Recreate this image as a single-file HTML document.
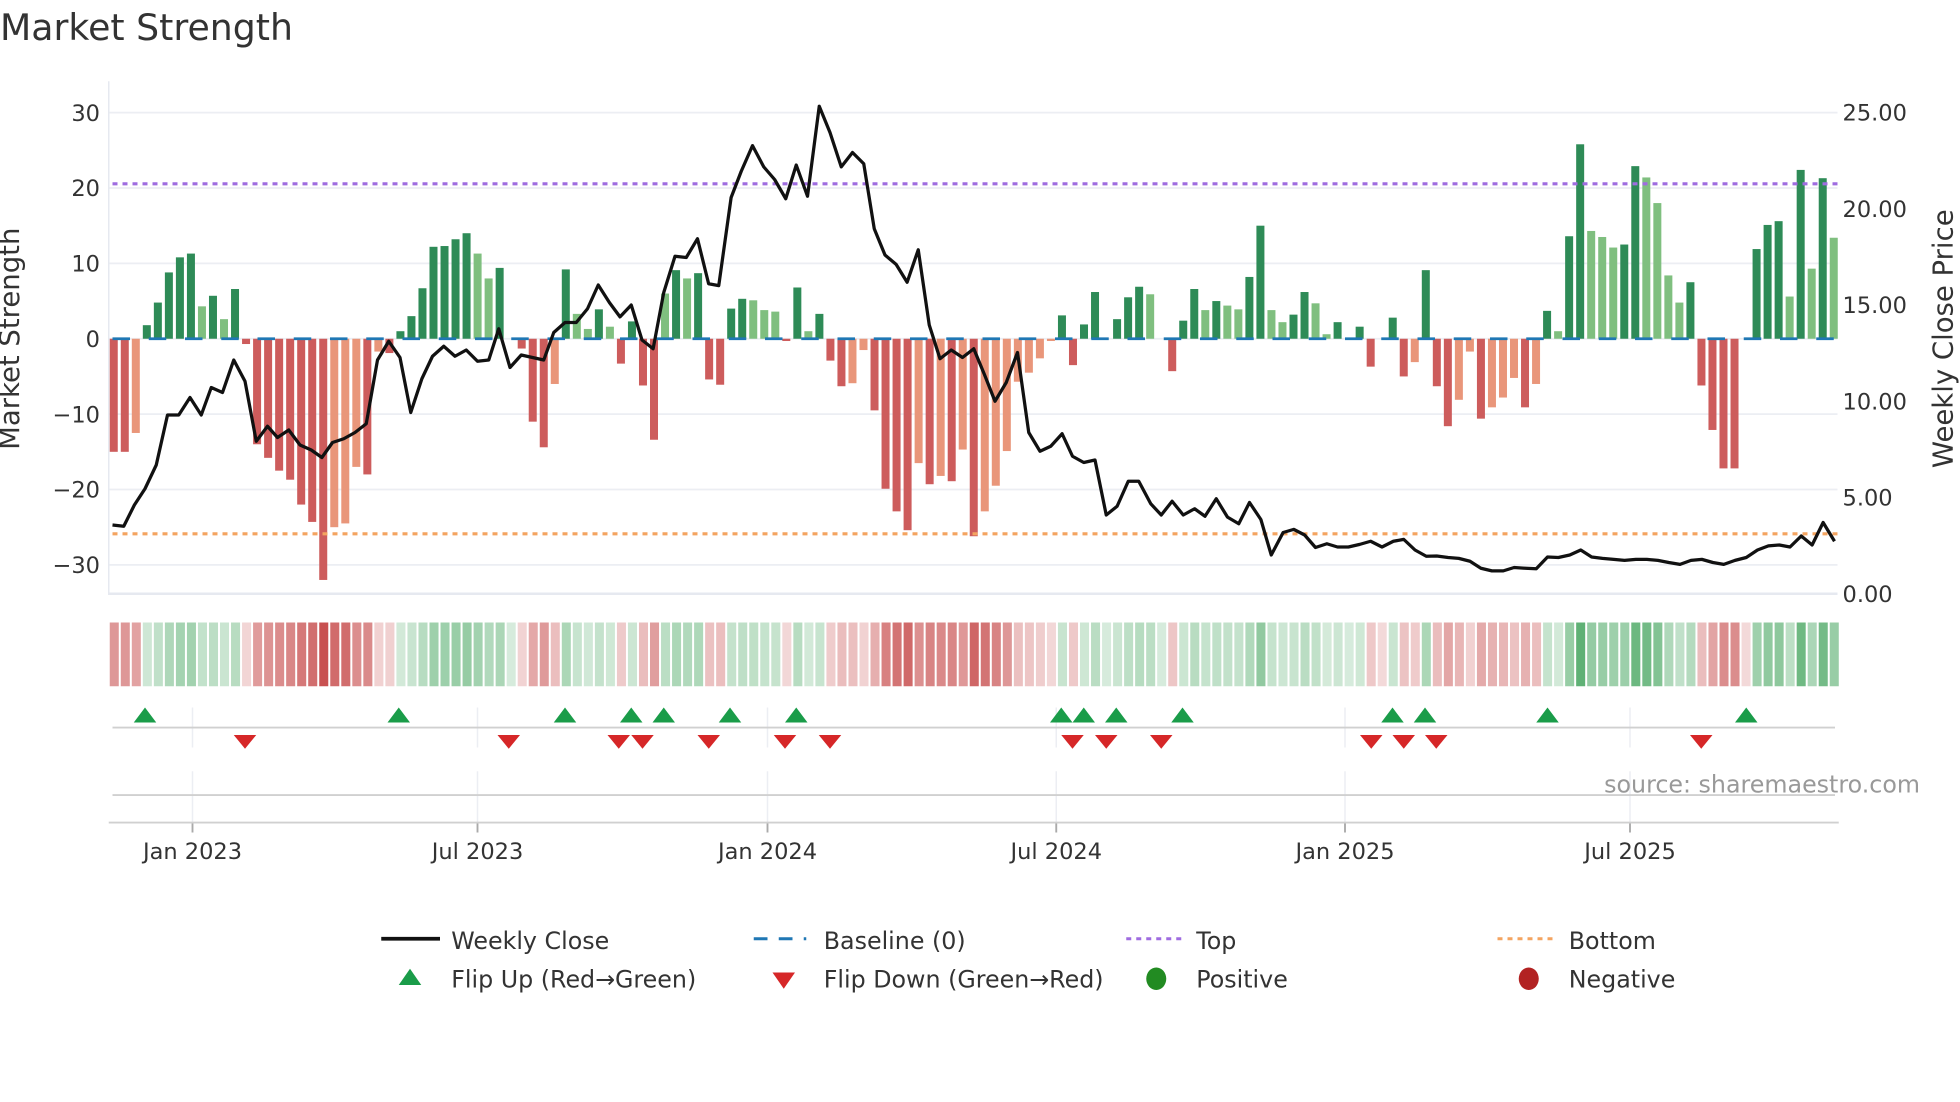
<!DOCTYPE html>
<html><head><meta charset="utf-8"><style>
html,body{margin:0;padding:0;background:#fff;width:1960px;height:1102px;overflow:hidden}
svg{display:block}
text{font-family:"DejaVu Sans","Liberation Sans",sans-serif;fill:#333}
</style></head><body>
<svg id="s" width="1960" height="1102" viewBox="0 0 1568 881.6" xmlns="http://www.w3.org/2000/svg">
<text x="0" y="32" font-size="29">Market Strength</text>
<g id="grid"></g>
<g id="heat"></g>
<g id="bars"></g>
<g id="lines"></g>
<g id="marks"></g>
<text x="15" y="271" font-size="22" text-anchor="middle" transform="rotate(-90 15 271)">Market Strength</text>
<text x="1562" y="271" font-size="22" text-anchor="middle" transform="rotate(-90 1562 271)">Weekly Close Price</text>
<text x="1536" y="634" font-size="19" text-anchor="end" style="fill:#999">source: sharemaestro.com</text>
<g font-size="19">
<line x1="305" y1="751" x2="352" y2="751" stroke="#111" stroke-width="3"/>
<text x="361" y="759">Weekly Close</text>
<line x1="603" y1="751" x2="645" y2="751" stroke="#1f77b4" stroke-width="2.4" stroke-dasharray="11 9"/>
<text x="659" y="759">Baseline (0)</text>
<line x1="901" y1="751" x2="945" y2="751" stroke="#9f6ce0" stroke-width="2.4" stroke-dasharray="4 4"/>
<text x="957" y="759">Top</text>
<line x1="1198" y1="751" x2="1243" y2="751" stroke="#f4a460" stroke-width="2.4" stroke-dasharray="4 4"/>
<text x="1255" y="759">Bottom</text>
<polygon points="319,788 337,788 328,775" fill="#1a9c49"/>
<text x="361" y="790">Flip Up (Red→Green)</text>
<polygon points="618,778 636,778 627,791" fill="#d62728"/>
<text x="659" y="790">Flip Down (Green→Red)</text>
<ellipse cx="925" cy="783" rx="8" ry="9" fill="#228b22"/>
<text x="957" y="790">Positive</text>
<ellipse cx="1223" cy="783" rx="8" ry="9" fill="#b22222"/>
<text x="1255" y="790">Negative</text>
</g>
</svg>
<script>
const NS="http://www.w3.org/2000/svg";
function el(p,t,a,txt){const e=document.createElementNS(NS,t);for(const k in a)e.setAttribute(k,a[k]);if(txt!==undefined)e.textContent=txt;document.getElementById(p).appendChild(e);return e;}
const V=[[-15,0],[-15,0],[-12.5,1],[1.8,0],[4.8,0],[8.8,0],[10.8,0],[11.3,0],[4.3,1],[5.7,0],[2.6,1],[6.6,0],[-0.7,0],[-14,0],[-15.8,0],[-17.5,0],[-18.7,0],[-22,0],[-24.3,0],[-32,0],[-25,1],[-24.5,1],[-17,1],[-18,0],[-1.7,1],[-1.9,0],[1,0],[3,0],[6.7,0],[12.2,0],[12.3,0],[13.2,0],[14,0],[11.3,1],[8,1],[9.4,0],[0,0],[-1.3,0],[-11,0],[-14.4,0],[-6,1],[9.2,0],[3.3,1],[1.3,1],[3.9,0],[1.6,1],[-3.3,0],[2.3,0],[-6.2,0],[-13.4,0],
[6,1],[9.1,0],[8,1],[8.7,0],[-5.4,0],[-6.1,0],[4,0],[5.3,0],[5.1,1],[3.8,1],[3.6,1],[-0.3,0],[6.8,0],[1,1],[3.3,0],[-2.9,0],[-6.3,0],[-5.9,1],[-1.5,1],[-9.5,0],[-19.9,0],[-22.9,0],[-25.4,0],[-16.5,1],[-19.3,0],[-18.2,1],[-18.9,0],[-14.7,1],[-26.2,0],[-22.9,1],[-19.5,1],[-14.9,1],[-5.7,1],[-4.5,1],[-2.6,1],[-0.3,1],[3.1,0],[-3.5,0],[1.9,0],[6.2,0],[0,0],[2.6,0],[5.5,0],[6.9,0],[5.9,1],[0,0],[-4.3,0],[2.4,0],[6.6,0],
[3.8,1],[5,0],[4.4,1],[3.9,1],[8.2,0],[15,0],[3.8,1],[2.2,1],[3.2,0],[6.2,0],[4.7,1],[0.6,1],[2.2,0],[0,0],[1.6,0],[-3.7,0],[0,0],[2.8,0],[-5,0],[-3.1,1],[9.1,0],[-6.3,0],[-11.6,0],[-8.1,1],[-1.7,1],[-10.6,0],[-9.1,1],[-7.8,1],[-5.2,1],[-9.1,0],[-6,1],[3.7,0],[1,1],[13.6,0],[25.8,0],[14.3,1],[13.5,1],[12.1,1],[12.5,0],[22.9,0],[21.4,1],[18,1],[8.4,1],[4.8,1],[7.5,0],[-6.2,0],[-12.1,0],[-17.2,0],[-17.2,0],[0,0],[11.9,0],[15.1,0],[15.6,0],[5.6,1],[22.4,0],[9.3,1],[21.3,0],[13.4,1]];
const X0=91,DX=(1467-91)/156;const Y0=271,PU=6.03;
[30,20,10,0,-10,-20,-30].forEach(v=>{const y=Y0-v*PU;el("grid","line",{x1:87,x2:1470,y1:y,y2:y,stroke:"#eceef3","stroke-width":1.4});el("grid","text",{x:80,y:y+6.5,"font-size":18,"text-anchor":"end"},(v<0?"\u2212":"")+Math.abs(v));});
el("grid","line",{x1:87,x2:1470,y1:475,y2:475,stroke:"#e6e9f0","stroke-width":2});
el("grid","line",{x1:87,x2:87,y1:65,y2:476,stroke:"#e6e9f0","stroke-width":1.2});
["25.00","20.00","15.00","10.00","5.00","0.00"].forEach((t,k)=>{el("grid","text",{x:1474,y:90+k*77+6.5,"font-size":18},t);});
const ticks=[[154,"Jan 2023"],[382,"Jul 2023"],[614,"Jan 2024"],[845,"Jul 2024"],[1076,"Jan 2025"],[1304,"Jul 2025"]];
ticks.forEach(([x,t])=>{el("grid","line",{x1:x,x2:x,y1:566,y2:598,stroke:"#eceef3","stroke-width":1.2});el("grid","line",{x1:x,x2:x,y1:617,y2:658,stroke:"#eceef3","stroke-width":1.2});el("grid","line",{x1:x,x2:x,y1:658,y2:666,stroke:"#aaa","stroke-width":1.5});el("grid","text",{x:x,y:687,"font-size":18,"text-anchor":"middle"},t);});
el("grid","line",{x1:90,x2:1468,y1:582,y2:582,stroke:"#d0d0d0","stroke-width":1.5});
el("grid","line",{x1:90,x2:1468,y1:636,y2:636,stroke:"#d0d0d0","stroke-width":1.5});
el("grid","line",{x1:87,x2:1471,y1:658,y2:658,stroke:"#d0d0d0","stroke-width":1.5});
let last=1;
V.forEach(([v],i)=>{let s=v>0?1:v<0?-1:last;last=s;const a=Math.min(1,0.22+Math.abs(v)/30*0.75);const base=s>0?[70,165,95]:[200,80,80];const c=base.map(b=>Math.round(255-(255-b)*a));const x=87+i*DX;el("heat","rect",{x:x+0.8,y:498,width:DX-1.6,height:51,fill:`rgb(${c})`});});
V.forEach(([v,l],i)=>{if(v===0)return;const x=X0+i*DX;const h=Math.abs(v)*PU;const col=v>0?(l?"#7fbf7f":"#2e8b57"):(l?"#e9967a":"#cd5c5c");el("bars","rect",{x:x-3.2,y:v>0?Y0-h:Y0,width:6.4,height:h,fill:col});});
el("lines","line",{x1:90,x2:1470,y1:Y0,y2:Y0,stroke:"#1f77b4","stroke-width":2.2,"stroke-dasharray":"14 15"});
el("lines","line",{x1:90,x2:1470,y1:147,y2:147,stroke:"#9f6ce0","stroke-width":2.5,"stroke-dasharray":"4 4"});
el("lines","line",{x1:90,x2:1470,y1:427,y2:427,stroke:"#f4a460","stroke-width":2.5,"stroke-dasharray":"4 4"});
const P=[[90,420],[99,421],[107.5,404],[116,391],[125,372],[134,332],[143,332],[152,318],[161,332],[169,310],[178,314],[187,288],[196,305],[205,353],[214,341],[222,350],[231,344],[240,356],[249,360],[257.5,366],[266,354],[275,351],[284,346],[293,339],[302,288],[311,273],[320,286],[328.6,330],[337.5,303],[346,285],[355,277],[364,285],[373,280],[382,289],[391,288],[399,263],[408,294],[417,284],[426,286],[435,288],[443,266],[452,258],[461,258],[470,247],[478.6,228],[487.5,242],[496,253.5],[505,244],[513.6,272],[522.5,279],[531,234],[540,205],[549,206],[558,191],[566.9,227],[575,228.5],[584.9,158],[593,137],[602,116.5],[611,133.5],[619.7,143.6],[628.6,159],[637,132],[646,157],[655.4,85],[664,106],[673,133.5],[682,122],[691,131],[699.4,183],[708,204],[716.9,211.5],[725.7,225.8],[734.6,199.8],[743.4,260],[752,287],[761,280],[770,286],[779,279],[787.7,300],[796,321],[805,306],[814,282],[823,346],[832,361],[840.6,357],[849.7,347],[858,365],[867,370],[876,368],[885,412],[893.7,405],[902.6,385],[911,385],[920.6,403],[929,412],[937.7,401],[946.6,412],[955.7,407],[964,413],[973,399],[982,413.7],[991,419],[999.6,402],[1008.7,415.6],[1017,444],[1026.5,426],[1035,423.5],[1043.7,428],[1052.4,438],[1061.5,435],[1070,437.6],[1078.7,437.6],[1087.8,435.5],[1096.5,433],[1105.6,437.6],[1114.7,433],[1123,431.5],[1132,440],[1141,445],[1149.4,444.8],[1158.5,446],[1167,446.7],[1176,449],[1184.7,454.6],[1193.5,456.7],[1202.6,456.7],[1211.3,454],[1220.4,454.6],[1229,455],[1238,445.6],[1246.7,446],[1255.8,444],[1264.6,440],[1273.3,445.6],[1282,446.7],[1291,447.5],[1299.6,448.3],[1308.7,447.5],[1317.5,447.5],[1326.3,448.3],[1335,450],[1344,451.5],[1352.8,448.3],[1361.5,447.5],[1370.3,450],[1379,451.5],[1388,448.3],[1397,446],[1406,440],[1414.7,436.7],[1423.5,436],[1432,437.6],[1441,428.8],[1449.7,436],[1458.5,418],[1467.6,433]];
el("lines","polyline",{points:P.map(p=>p.join(",")).join(" "),fill:"none",stroke:"#111","stroke-width":2.6,"stroke-linejoin":"round"});
[116,319,452,505,531,584,637,849,867,893,946,1114,1140,1238,1397].forEach(x=>el("marks","polygon",{points:`${x-9},578 ${x+9},578 ${x},566`,fill:"#1a9c49"}));
[196,407,495,514,567,628,664,858,885,929,1097,1123,1149,1361].forEach(x=>el("marks","polygon",{points:`${x-9},588 ${x+9},588 ${x},599`,fill:"#d62728"}));
</script>
</body></html>
